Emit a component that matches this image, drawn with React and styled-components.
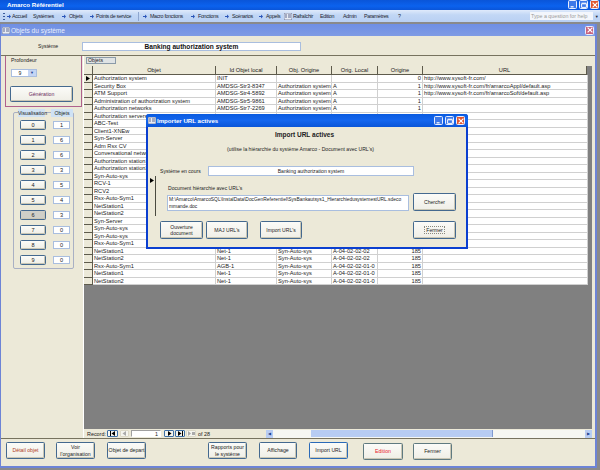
import React from 'react'
import styled, { createGlobalStyle } from 'styled-components'

const GlobalStyle = createGlobalStyle`
  html, body { margin: 0; padding: 0; background: #808080; }
  * { box-sizing: border-box; }
`

const Page = styled.div`
  position: relative;
  width: 600px;
  height: 470px;
  overflow: hidden;
  display: flex;
  flex-direction: column;
  background: #8a8a8a;
  font-family: "Liberation Sans", Arial, sans-serif;
  font-size: 5.2px;
  color: #222;
`

const AppTitle = styled.div`
  height: 10px;
  flex: none;
  display: flex;
  align-items: flex-start;
  padding-left: 7px;
  background: linear-gradient(#0a55d8, #0b62ee 60%, #0a55d8);
  color: #fff;
  font-weight: bold;
  font-size: 6.2px;
  line-height: 9px;
`

const AppTitleText = styled.span`
  flex: 1;
`

const WinButtons = styled.div`
  display: flex;
  gap: 2px;
  padding-right: 1px;
`

const WinButton = styled.div`
  width: 9px;
  height: 9px;
  border: 1px solid #e8eeff;
  border-radius: 1.5px;
  background: ${({ $bg }) => $bg || '#3d78e8'};
  display: flex;
  align-items: center;
  justify-content: center;
`

const MenuBar = styled.div`
  height: 12px;
  flex: none;
  display: flex;
  align-items: center;
  padding-left: 3px;
  background: linear-gradient(#dfeafb, #c2d7f5 40%, #b9d0f3);
  color: #1b2430;
  font-size: 5.3px;
  letter-spacing: -0.3px;
`

const MenuItem = styled.span`
  width: ${({ $w }) => $w}px;
  flex: none;
  display: flex;
  align-items: center;
  gap: ${({ $gap }) => $gap}px;
  white-space: nowrap;
`

const MenuSep = styled.span`
  width: 5px;
  height: 9px;
  flex: none;
  border-left: 1px solid #8ea6cf;
`

const GripSlot = styled.span`
  width: 4px;
  flex: none;
  display: flex;
`

const HelpBox = styled.div`
  width: 63px;
  height: 8px;
  margin-left: auto;
  padding-left: 1px;
  background: #f3f6fc;
  color: #9a9a9a;
  line-height: 8px;
  letter-spacing: 0;
  white-space: nowrap;
`

const HelpArrow = styled.span`
  width: 7px;
  text-align: center;
  font-size: 4px;
`

const Workspace = styled.div`
  flex: 1;
  min-height: 0;
  padding: 2px 3px 2px 0;
  display: flex;
`

const ChildWindow = styled.div`
  width: 597px;
  display: flex;
  flex-direction: column;
  border: solid #6d84d6;
  border-width: 0 2px 2px 1px;
  background: #ece9d8;
`

const ChildTitle = styled.div`
  height: 12px;
  flex: none;
  display: flex;
  align-items: center;
  gap: 1px;
  padding: 0 1px;
  background: linear-gradient(#6f8fe4, #7f9be4);
  color: #e8eefc;
  font-size: 6.5px;
`

const SystemRow = styled.div`
  height: 20px;
  flex: none;
  display: flex;
  align-items: center;
  padding: 1px 0 0 37px;
  border-bottom: 1px solid #77735f;
`

const SystemLabel = styled.span`
  width: 44px;
`

const SystemField = styled.div`
  width: 219px;
  height: 9px;
  border: 1px solid #a9bedf;
  background: #fff;
  text-align: center;
  font-size: 6.6px;
  font-weight: bold;
  line-height: 8px;
  color: #111;
`

const MainRow = styled.div`
  height: 383px;
  flex: none;
  display: flex;
  border-bottom: 1px solid #77735f;
`

const LeftColumn = styled.div`
  width: 83px;
  flex: none;
  padding-left: 4px;
  border-right: 1px solid #fff;
`

const DepthBox = styled.div`
  width: 77px;
  height: 51px;
  display: flex;
  flex-direction: column;
  align-items: flex-start;
  padding: 1px 0 0 4px;
  border: 1px solid #b0618c;
  border-top: none;
`

const DepthLabel = styled.span`
  margin-left: 1px;
  line-height: 7px;
`

const DepthSelect = styled.div`
  width: 26px;
  height: 8px;
  margin: 5px 0 0 1px;
  display: flex;
  border: 1px solid #a9bedf;
  background: #fff;
  line-height: 6px;
`

const DepthValue = styled.span`
  flex: 1;
  text-align: center;
`

const DepthArrow = styled.span`
  width: 8px;
  background: #c4d5f4;
  text-align: center;
  color: #25438c;
  font-size: 4px;
`

const FormButton = styled.button`
  padding: 0;
  font: inherit;
  line-height: 1.25;
  color: ${({ $color }) => $color || '#222'};
  width: ${({ $w }) => $w || 39}px;
  height: ${({ $h }) => $h || 17}px;
  margin-left: ${({ $ml }) => $ml || 0}px;
  margin-top: ${({ $mt }) => $mt || 0}px;
  flex: none;
  border: 1px solid ${({ $edge }) => $edge || '#44698f'};
  border-radius: 1.5px;
  background: ${({ $pressed }) => ($pressed ? '#cfcfc8' : 'linear-gradient(#fbfbf8, #efeee6)')};
  box-shadow: inset -1px -1px 0 #c9c6b4;
`

const Group = styled.div`
  position: relative;
  width: 61px;
  height: 157px;
  margin: 5px 0 0 8px;
  padding-top: 7px;
  display: flex;
  flex-direction: column;
  gap: 5px;
  border: 1px solid #a9b0c4;
  border-radius: 2px;
`

const GroupLegend = styled.span`
  position: absolute;
  top: -4px;
  left: ${({ $left }) => $left}px;
  width: ${({ $w }) => $w}px;
  height: 8px;
  background: #cfe2f5;
  text-align: center;
  line-height: 8px;
`

const LevelRow = styled.div`
  height: 10px;
  display: flex;
  align-items: center;
  padding-left: 6px;
  font-size: 5.6px;
`

const LevelCount = styled.div`
  width: 17px;
  height: 8px;
  margin-left: 7px;
  border: 1px solid #a9bedf;
  background: #fff;
  text-align: center;
  line-height: 6px;
`

const GridPanel = styled.div`
  width: 508px;
  flex: none;
  display: flex;
  flex-direction: column;
`

const TabRow = styled.div`
  height: 10px;
  flex: none;
  padding: 1px 0 0 2px;
`

const TabLabel = styled.div`
  width: 30px;
  height: 7px;
  border: 1px solid #8a9aa8;
  background: #dfe3e4;
  line-height: 5px;
  padding-left: 1px;
`

const GridArea = styled.div`
  height: 363px;
  flex: none;
  background: #808080;
  font-size: 5.7px;
`

const GridRow = styled.div`
  width: ${({ $header }) => ($header ? 503 : 504)}px;
  height: ${({ $header }) => ($header ? 9 : 7.5)}px;
  display: grid;
  grid-template-columns: 9px 123px 61px 55px 46px 45px 1fr;
  background: ${({ $header }) => ($header ? '#ece9d8' : '#fff')};
`

const Selector = styled.div`
  background: #ece9d8;
  border-bottom: 1px solid #5e5b4c;
  border-right: 1px solid #5e5b4c;
  display: flex;
  align-items: center;
  justify-content: center;
`

const HeadCell = styled.div`
  border-right: 1px solid #5e5b4c;
  border-bottom: 1px solid #5e5b4c;
  text-align: center;
  line-height: 8px;
  white-space: nowrap;
  overflow: hidden;
`

const Cell = styled.div`
  padding: 0 1px;
  border-right: 1px solid #d0d0d0;
  border-bottom: 1px solid #d0d0d0;
  line-height: 6.5px;
  white-space: nowrap;
  overflow: hidden;
  text-align: ${({ $right }) => ($right ? 'right' : 'left')};
`

const NavBar = styled.div`
  height: 9px;
  flex: none;
  display: flex;
  align-items: center;
  padding-left: 3px;
  font-size: 5.4px;
`

const NavLabel = styled.span`
  width: 20px;
`

const NavButton = styled.div`
  width: ${({ $w }) => $w || 10}px;
  height: 7px;
  margin-left: ${({ $ml }) => $ml ?? 1}px;
  border: ${({ $off }) => ($off ? '1px solid #dcd9c8' : '1px solid #3c6ea5')};
  border-radius: 1px;
  background: #f5f5ef;
  display: flex;
  align-items: center;
  justify-content: center;
  color: ${({ $off }) => ($off ? '#aaa' : '#000')};
`

const NavInput = styled.div`
  width: 30px;
  height: 7px;
  margin-left: 2px;
  background: #fff;
  border: 1px solid #a0a0a0;
  border-right-color: #fff;
  border-bottom-color: #fff;
  text-align: right;
  line-height: 6px;
  padding-right: 2px;
`

const NavCount = styled.span`
  margin-left: 2px;
  width: 68px;
`

const HScroll = styled.div`
  flex: 1;
  height: 8px;
  display: flex;
  align-items: center;
  background: #f6f7f2;
`

const ScrollEnd = styled.div`
  width: 7px;
  height: 8px;
  background: #b9cdf3;
  color: #21408c;
  font-size: 4px;
  line-height: 8px;
  text-align: center;
`

const ScrollThumb = styled.div`
  width: 182px;
  height: 7px;
  margin-left: 38px;
  margin-right: auto;
  background: #b7ccf2;
  border-right: 1px solid #7f9ad0;
`

const BottomRow = styled.div`
  flex: 1;
  display: flex;
  align-items: flex-start;
  padding: 3px 0 0 5px;
`

const Dialog = styled.div`
  position: absolute;
  left: 146px;
  top: 114px;
  width: 322px;
  height: 135px;
  display: flex;
  flex-direction: column;
  border: 2px solid #0b3fd0;
  border-top: none;
  border-radius: 3px 3px 0 0;
  background: #ece9d8;
  font-size: 5.1px;
`

const DialogTitle = styled.div`
  height: 13px;
  flex: none;
  margin: 0 -2px;
  display: flex;
  align-items: center;
  gap: 1px;
  padding: 0 2px;
  border-radius: 3px 3px 0 0;
  background: linear-gradient(#0a5be0, #1466ee 50%, #0a55d8);
  color: #fff;
  font-size: 6.1px;
  font-weight: bold;
`

const DialogBody = styled.div`
  flex: 1;
  position: relative;
  display: flex;
  flex-direction: column;
`

const DialogHeading = styled.div`
  margin-top: 4px;
  padding-right: 5px;
  text-align: center;
  font-weight: bold;
  font-size: 6.5px;
  line-height: 8px;
`

const DialogNote = styled.div`
  margin-top: 6px;
  padding-right: 13px;
  text-align: center;
  line-height: 8px;
`

const CurrentRow = styled.div`
  margin-top: 13px;
  height: 10px;
  display: flex;
  align-items: center;
  padding-left: 12px;
`

const CurrentLabel = styled.span`
  width: 48px;
  white-space: nowrap;
`

const CurrentField = styled.div`
  width: 206px;
  height: 10px;
  border: 1px solid #a9bedf;
  background: #fff;
  text-align: center;
  line-height: 8px;
`

const RecordMark = styled.div`
  position: absolute;
  left: 2px;
  top: 49px;
  width: 6px;
  height: 40px;
  border-right: 1px solid #4a4a40;
  padding-top: 2px;
`

const DocLabel = styled.div`
  margin: 8px 0 0 20px;
  line-height: 8px;
`

const DocRow = styled.div`
  display: flex;
  align-items: flex-start;
  padding-left: 19px;
  height: 18px;
  margin-top: 1px;
`

const DocField = styled.div`
  width: 242px;
  height: 16px;
  margin-top: 2px;
  padding: 1px 0 0 1px;
  border: 1px solid #a9bedf;
  background: #fff;
  line-height: 6.5px;
  font-size: 4.9px;
  white-space: nowrap;
  overflow: hidden;
`

const DialogActions = styled.div`
  display: flex;
  margin-top: 10px;
  padding-left: 12px;
`

const FocusText = styled.span`
  display: inline-block;
  border: 1px dotted #8a8a80;
  padding: 0 1px;
  line-height: 6px;
`

const Arrow = () => (
  <svg width="4" height="5" viewBox="0 0 8 10">
    <path d="M0 4h4V1l4 4-4 4V6H0z" fill="#2a55b8" />
  </svg>
)

const Grip = () => (
  <svg width="3" height="9" viewBox="0 0 3 9">
    <path d="M0 1h2v1H0zM0 4h2v1H0zM0 7h2v1H0z" fill="#3a5a9a" />
  </svg>
)

const WinIcon = ({ kind }) => (
  <svg width="6" height="6" viewBox="0 0 10 10" fill="none" stroke="#fff" strokeWidth="1.6">
    {kind === 'min' && <path d="M1 8h5" strokeWidth="2" />}
    {kind === 'max' && <path d="M1 3h8v6H1zM1 2h8" />}
    {kind === 'close' && <path d="M1 1l8 8M9 1l-8 8" strokeWidth="2" />}
  </svg>
)

const FormIcon = () => (
  <svg width="8" height="7" viewBox="0 0 8 7">
    <rect width="8" height="7" fill="#e8ecf4" stroke="#3a4a7a" strokeWidth="0.6" />
    <path d="M1 2h2M1 4h2M4 2h3M4 4h3" stroke="#3a4a7a" strokeWidth="0.8" />
  </svg>
)

const RecordArrow = () => (
  <svg width="4" height="5" viewBox="0 0 4 5">
    <path d="M0 0l4 2.5L0 5z" fill="#000" />
  </svg>
)

const NavGlyph = ({ first, last, prev, star }) => (
  <svg width="7" height="5" viewBox="0 0 7 5" fill="currentColor">
    {first && <path d="M1 0h1v5H1zM6 0v5L2.5 2.5z" />}
    {last && <path d="M5 0h1v5H5zM1 0v5l3.5-2.5z" />}
    {prev && <path d="M5 0v5L1.500 2.500z" />}
    {star && <path d="M0 0v5l3-2.500zM4 1h3v3H4z" />}
    {!first && !last && !prev && !star && <path d="M2 0v5l3.500-2.500z" />}
  </svg>
)

const menu = [
  { label: 'Accueil', w: 26, arrow: true, gap: 1 },
  { label: 'Systèmes', w: 29 },
  { label: 'Objets', w: 28, arrow: true, gap: 3 },
  { label: 'Points de service', w: 48, arrow: true, gap: 2 },
  { sep: true },
  { label: 'Macro fonctions', w: 48, arrow: true, gap: 3 },
  { label: 'Fonctions', w: 34, arrow: true, gap: 3 },
  { label: 'Scénarios', w: 34, arrow: true, gap: 3 },
  { label: 'Appels', w: 25, arrow: true, gap: 3 },
  { label: 'Rafraîchir', w: 36, icon: true, gap: 1 },
  { label: 'Edition', w: 23 },
  { label: 'Admin', w: 21 },
  { label: 'Paramètres', w: 34 },
  { label: '?', w: 8 },
]

const levels = [1, 6, 6, 3, 5, 4, 3, 0, 0, 0]

const host = 'http://www.sysoft-fr.com/'

const rows = [
  ['Authorization system', 'INIT', '', '', '0', host],
  ['Security Box', 'AMDSG-Str3-8347', 'Authorization system', 'A', '1', host + 'fr/amarcoAppl/default.asp'],
  ['ATM Support', 'AMDSG-Str4-5892', 'Authorization system', 'A', '1', host + 'fr/amarcoSoft/default.asp'],
  ['Administration of authorization system', 'AMDSG-Str5-9861', 'Authorization system', 'A', '1', ''],
  ['Authorization networks', 'AMDSG-Str7-2269', 'Authorization system', 'A', '1', ''],
  ['Authorization servers'],
  ['ABC-Test'],
  ['Client1-XNEw'],
  ['Syn-Server'],
  ['Adm Rsx CV'],
  ['Conversational network'],
  ['Authorization station1'],
  ['Authorization station2'],
  ['Syn-Auto-sys'],
  ['RCV-1'],
  ['RCV2'],
  ['Rsx-Auto-Sym1'],
  ['NetStation1'],
  ['NetStation2'],
  ['Syn-Server'],
  ['Syn-Auto-sys'],
  ['Syn-Auto-sys'],
  ['Rsx-Auto-Sym1'],
  ['NetStation1', 'Net-1', 'Syn-Auto-sys', 'A-04-02-02-02', '185', ''],
  ['NetStation2', 'Net-1', 'Syn-Auto-sys', 'A-04-02-02-02', '185', ''],
  ['Rsx-Auto-Sym1', 'AGB-1', 'Syn-Auto-sys', 'A-04-02-02-01-0', '185', ''],
  ['NetStation1', 'Net-1', 'Syn-Auto-sys', 'A-04-02-02-01-0', '185', ''],
  ['NetStation2', 'Net-1', 'Syn-Auto-sys', 'A-04-02-02-01-0', '185', ''],
]

const headers = ['Objet', 'Id Objet local', 'Obj. Origine', 'Orig. Local', 'Origine', 'URL']

const App = () => (
  <Page>
    <GlobalStyle />
    <AppTitle>
      <AppTitleText>Amarco Référentiel</AppTitleText>
      <WinButtons>
        <WinButton><WinIcon kind="min" /></WinButton>
        <WinButton><WinIcon kind="max" /></WinButton>
        <WinButton $bg="#e0562e"><WinIcon kind="close" /></WinButton>
      </WinButtons>
    </AppTitle>

    <MenuBar>
      <GripSlot><Grip /></GripSlot>
      {menu.map((item, i) =>
        item.sep ? (
          <MenuSep key={i} />
        ) : (
          <MenuItem key={i} $w={item.w} $gap={item.gap || 0}>
            {item.arrow && <Arrow />}
            {item.icon && <FormIcon />}
            {item.label}
          </MenuItem>
        )
      )}
      <HelpBox>Type a question for help</HelpBox>
      <HelpArrow>▼</HelpArrow>
    </MenuBar>

    <Workspace>
      <ChildWindow>
        <ChildTitle>
          <FormIcon />
          <AppTitleText>Objets du système</AppTitleText>
          <WinButton $bg="#c9637e"><WinIcon kind="close" /></WinButton>
        </ChildTitle>

        <SystemRow>
          <SystemLabel>Système</SystemLabel>
          <SystemField>Banking authorization system</SystemField>
        </SystemRow>

        <MainRow>
          <LeftColumn>
            <DepthBox>
              <DepthLabel>Profondeur</DepthLabel>
              <DepthSelect>
                <DepthValue>9</DepthValue>
                <DepthArrow>▼</DepthArrow>
              </DepthSelect>
              <FormButton $w={63} $h={16} $mt={9} $color="#6a2a5e">Génération</FormButton>
            </DepthBox>
            <Group>
              <GroupLegend $left={4} $w={27}>Visualisation</GroupLegend>
              <GroupLegend $left={37} $w={22}>Objets</GroupLegend>
              {levels.map((count, i) => (
                <LevelRow key={i}>
                  <FormButton $w={26} $h={10} $pressed={i === 6}>{i}</FormButton>
                  <LevelCount>{count}</LevelCount>
                </LevelRow>
              ))}
            </Group>
          </LeftColumn>

          <GridPanel>
            <TabRow><TabLabel>Objets</TabLabel></TabRow>
            <GridArea>
              <GridRow $header>
                <Selector />
                {headers.map((h) => <HeadCell key={h}>{h}</HeadCell>)}
              </GridRow>
              {rows.map((row, i) => (
                <GridRow key={i}>
                  <Selector>{i === 0 && <RecordArrow />}</Selector>
                  <Cell>{row[0]}</Cell>
                  <Cell>{row[1]}</Cell>
                  <Cell>{row[2]}</Cell>
                  <Cell>{row[3]}</Cell>
                  <Cell $right>{row[4]}</Cell>
                  <Cell>{row[5]}</Cell>
                </GridRow>
              ))}
            </GridArea>
            <NavBar>
              <NavLabel>Record:</NavLabel>
              <NavButton $w={11} $ml={0}><NavGlyph first /></NavButton>
              <NavButton $ml={2} $w={9} $off><NavGlyph prev /></NavButton>
              <NavInput>1</NavInput>
              <NavButton $ml={3}><NavGlyph /></NavButton>
              <NavButton><NavGlyph last /></NavButton>
              <NavButton $off><NavGlyph star /></NavButton>
              <NavCount>of 28</NavCount>
              <HScroll>
                <ScrollEnd>◀</ScrollEnd>
                <ScrollThumb />
                <ScrollEnd>▶</ScrollEnd>
              </HScroll>
            </NavBar>
          </GridPanel>
        </MainRow>

        <BottomRow>
          <FormButton $color="#b0401c">Détail objet</FormButton>
          <FormButton $ml={11}>Voir<br />l'organisation</FormButton>
          <FormButton $ml={12}>Objet de depart</FormButton>
          <FormButton $ml={62}>Rapports pour<br />le système</FormButton>
          <FormButton $ml={12} $w={38}>Affichage</FormButton>
          <FormButton $ml={12} $edge="#2a6ab8">Import URL</FormButton>
          <FormButton $ml={15} $w={40} $mt={1} $color="#e8202c" $edge="#5f7a80">Edition</FormButton>
          <FormButton $ml={10} $mt={1} $edge="#5f7a80">Fermer</FormButton>
        </BottomRow>
      </ChildWindow>
    </Workspace>

    <Dialog>
      <DialogTitle>
        <FormIcon />
        <AppTitleText>Importer URL actives</AppTitleText>
        <WinButtons>
          <WinButton><WinIcon kind="min" /></WinButton>
          <WinButton><WinIcon kind="max" /></WinButton>
          <WinButton $bg="#e0562e"><WinIcon kind="close" /></WinButton>
        </WinButtons>
      </DialogTitle>
      <DialogBody>
        <DialogHeading>Import URL actives</DialogHeading>
        <DialogNote>(utilise la hiérarchie du système Amarco - Document avec URL's)</DialogNote>
        <CurrentRow>
          <CurrentLabel>Système en cours</CurrentLabel>
          <CurrentField>Banking authorization system</CurrentField>
        </CurrentRow>
        <RecordMark><RecordArrow /></RecordMark>
        <DocLabel>Document hiérarchie avec URL's</DocLabel>
        <DocRow>
          <DocField>M:\Amarco\AmarcoSQL\InstalData\DocGenReferentiel\SysBankautsys1_HierarchiedusystemestURL.sdeco<br />mmande.doc</DocField>
          <FormButton $w={43} $h={18} $ml={4}>Chercher</FormButton>
        </DocRow>
        <DialogActions>
          <FormButton $w={43} $h={18}>Ouverture<br />document</FormButton>
          <FormButton $w={42} $h={18} $ml={3}>MAJ URL's</FormButton>
          <FormButton $w={42} $h={18} $ml={12}>Import URL's</FormButton>
          <FormButton $w={43} $h={18} $ml={111}><FocusText>Fermer</FocusText></FormButton>
        </DialogActions>
      </DialogBody>
    </Dialog>
  </Page>
)

export default App
